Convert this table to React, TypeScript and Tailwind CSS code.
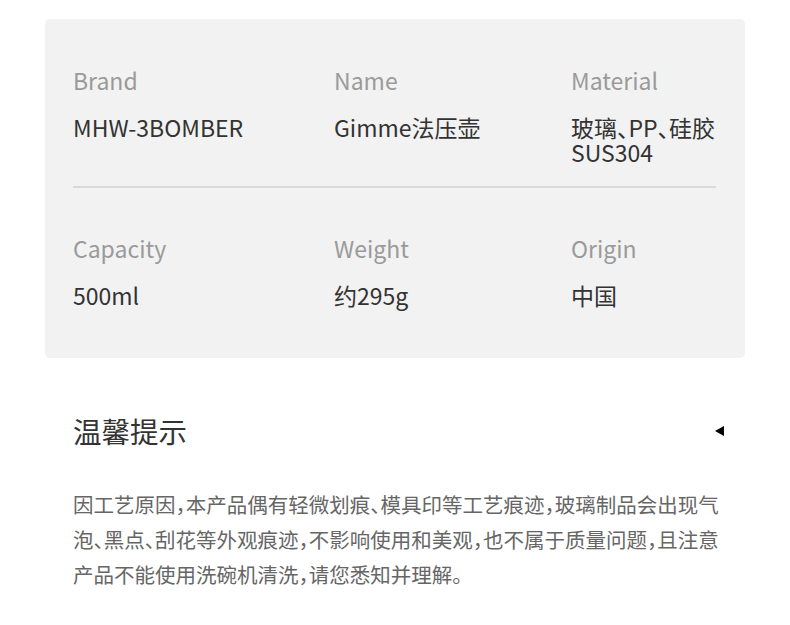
import React from "react";

const FONT = {
  fontFamily: '"Noto Sans CJK SC", "Noto Sans", sans-serif',
  fontFeatureSettings: '"halt"',
};

const rows = [
  [
    { label: "Brand", value: ["MHW-3BOMBER"] },
    { label: "Name", value: ["Gimme法压壶"] },
    { label: "Material", value: ["玻璃、PP、硅胶", "SUS304"] },
  ],
  [
    { label: "Capacity", value: ["500ml"] },
    { label: "Weight", value: ["约295g"] },
    { label: "Origin", value: ["中国"] },
  ],
];

function SpecRow({ items }: { items: { label: string; value: string[] }[] }) {
  return (
    <div className="grid grid-cols-[261px_237px_1fr]">
      {items.map((it) => (
        <div key={it.label}>
          <div className="text-[23px] leading-[30px] text-[#9a9a9a]">{it.label}</div>
          <div className="mt-[20px] text-[23px] leading-[25px] text-[#333] whitespace-nowrap">
            {it.value.map((v) => (
              <div key={v}>{v}</div>
            ))}
          </div>
        </div>
      ))}
    </div>
  );
}

export default function App() {
  return (
    <div className="w-[790px] h-[625px] bg-white overflow-hidden" style={FONT}>
      <div className="pt-[19px] px-[45px]">
        <div className="bg-[#f2f2f2] rounded-[5px] px-[28px] pt-[46px] pb-[50px]">
          <SpecRow items={rows[0]} />
          <div className="h-[2px] bg-[#d9d9d9] mt-[21px] mb-[45px] mr-[1px]" />
          <SpecRow items={rows[1]} />
        </div>
      </div>

      <div className="px-[73px] mt-[53px]">
        <div className="flex items-center justify-between">
          <h2 className="text-[28.5px] leading-[40px] text-[#333]">温馨提示</h2>
          <span className="w-0 h-0 border-y-[5px] border-y-transparent border-r-[9px] border-r-black mr-[-7px]" />
        </div>
        <div className="mt-[36px] text-[20.5px] leading-[35px] text-[#666] whitespace-nowrap">
          <div>因工艺原因，本产品偶有轻微划痕、模具印等工艺痕迹，玻璃制品会出现气</div>
          <div>泡、黑点、刮花等外观痕迹，不影响使用和美观，也不属于质量问题，且注意</div>
          <div>产品不能使用洗碗机清洗，请您悉知并理解。</div>
        </div>
      </div>
    </div>
  );
}
